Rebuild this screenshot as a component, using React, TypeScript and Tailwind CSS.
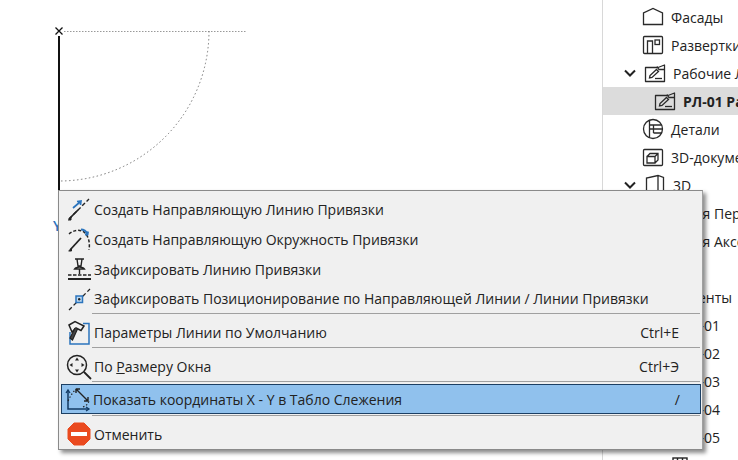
import { ReactNode } from "react";

type TRow = {
  label: string;
  icon?: ReactNode;
  chevron?: boolean;
  selected?: boolean;
  pad: string;
};

const Chevron = () => (
  <svg width="14" height="9" viewBox="0 0 14 9" className="shrink-0">
    <path d="M2 1.5 L7 6.5 L12 1.5" fill="none" stroke="#222" strokeWidth="2" />
  </svg>
);

const TreeIcon = ({ children }: { children: ReactNode }) => (
  <svg width="22" height="22" viewBox="0 0 22 22" fill="none" stroke="#2a2a2a" strokeWidth="1.3" className="shrink-0">
    {children}
  </svg>
);

const sheet = (
  <>
    <path d="M1.5 19.5V5.5H14L20.5 3V19.5Z" strokeLinejoin="round" />
    <path d="M13 4.5L15 7.5L20 7.5" />
    <path d="M5.5 16L6 13.5L12.5 7.5L14.5 9.5L8 15.5Z" />
    <path d="M11 16.5H18" />
  </>
);

const rows: TRow[] = [
  { label: "Фасады", pad: "pl-[39px]", icon: <TreeIcon><path d="M1.5 18.5V7L11 2.5L20.5 7V18.5Z" /></TreeIcon> },
  { label: "Развертки", pad: "pl-[39px]", icon: <TreeIcon><rect x="1.5" y="2.5" width="19" height="17" rx="1" /><path d="M5.5 19V7H10.5V19" /><rect x="13" y="6" width="4.5" height="4.5" /></TreeIcon> },
  { label: "Рабочие Листы", pad: "pl-[20px]", chevron: true, icon: <TreeIcon>{sheet}</TreeIcon> },
  { label: "РЛ-01 Рабочий Лист", pad: "pl-[51px]", selected: true, icon: <TreeIcon>{sheet}</TreeIcon> },
  { label: "Детали", pad: "pl-[39px]", icon: <TreeIcon><circle cx="11" cy="11" r="9.5" /><path d="M7.5 2V20M7.5 7H19.5M11.5 7V15M7.5 11H11.5M11.5 11H20.5M11.5 15H19.5" /></TreeIcon> },
  { label: "3D-документы", pad: "pl-[39px]", icon: <TreeIcon><rect x="1.5" y="3.5" width="19" height="16" rx="1" /><path d="M5 10.5H13V17H5ZM5 10.5L8 7.5H16V14L13 17M13 10.5L16 7.5" /></TreeIcon> },
  { label: "3D", pad: "pl-[20px]", chevron: true, icon: <TreeIcon><path d="M2.5 20V4L14 1.5L19.5 3.5V20ZM14 1.5V20" /></TreeIcon> },
  { label: "Общая Перспектива", pad: "pl-[60px]" },
  { label: "Общая Аксонометрия", pad: "pl-[60px]" },
  { label: "Итоги", pad: "pl-[60px]" },
  { label: "Элементы", pad: "pl-[60px]" },
  { label: "ПКЭ-01", pad: "pl-[69px]" },
  { label: "ПКЭ-02", pad: "pl-[69px]" },
  { label: "ПКЭ-03", pad: "pl-[69px]" },
  { label: "ПКЭ-04", pad: "pl-[69px]" },
  { label: "ПКЭ-05", pad: "pl-[69px]" },
  { label: "", pad: "pl-[69px]", icon: <svg width="16" height="16" viewBox="0 0 16 16" fill="none" stroke="#222" strokeWidth="1.4"><rect x="1" y="1" width="14" height="14" /><path d="M1 5H15M5.5 1V15M10.5 1V15" /></svg> },
];

const MenuIcon = ({ children }: { children: ReactNode }) => (
  <svg width="26" height="26" viewBox="0 0 26 26" fill="none" stroke="#222" strokeWidth="1.5" className="shrink-0">
    {children}
  </svg>
);

const icons = {
  line: (
    <MenuIcon>
      <path d="M3 23L23 3" strokeDasharray="4 2.2" strokeWidth="1.4" />
      <path d="M3 23L12 14" strokeWidth="1.7" />
      <path d="M2 24h3v-3" fill="#222" strokeWidth="1" />
      <path d="M7 12L14 6M11 5.5L15 5L14.5 9" stroke="#2b74bd" strokeWidth="1.7" />
    </MenuIcon>
  ),
  circle: (
    <MenuIcon>
      <path d="M3 8C9 3 16 3 20 8C23 12 24 18 23 24" strokeDasharray="3 2" />
      <path d="M4 24L15 12" strokeWidth="1.8" />
      <path d="M2.5 25h3v-3" fill="#222" strokeWidth="1" />
      <path d="M15 3.5C18 3.5 20 5 21.5 8M19 8.5L21.5 8.5L22 5.5" stroke="#2b74bd" strokeWidth="2" />
    </MenuIcon>
  ),
  pin: (
    <MenuIcon>
      <path d="M9 3H18M11 3L12 10H15L16 3M8.5 13C10 10.5 17 10.5 18.5 13ZM13.5 13V18" strokeWidth="1.4" />
      <path d="M2 19H25" strokeDasharray="3.5 1.5" />
      <path d="M2 23H25" strokeWidth="2" />
    </MenuIcon>
  ),
  lock: (
    <MenuIcon>
      <path d="M3 24L24 3" strokeDasharray="4 2.5" strokeWidth="1.3" />
      <rect x="10" y="10" width="6.5" height="6.5" stroke="#2b74bd" strokeWidth="1.5" fill="#bcd8f0" />
      <circle cx="13.2" cy="13.2" r="1.2" fill="#222" stroke="none" />
    </MenuIcon>
  ),
  params: (
    <MenuIcon>
      <path d="M4 12V24H23V3.5H17" stroke="#2b74bd" strokeWidth="1.5" />
      <path d="M3 5L9 1.5L18 6L15 10.5L10 8L6 12Z" fill="#f0f0f0" strokeWidth="1.5" />
      <path d="M9 8L4 18L6.5 20L11.5 9" fill="#444" strokeWidth="1.2" />
    </MenuIcon>
  ),
  zoom: (
    <MenuIcon>
      <circle cx="11" cy="11" r="9.5" strokeWidth="1.5" />
      <path d="M18 18L25 25" strokeWidth="1.8" />
      <path d="M11 3.5L9 6.5H13ZM11 18.5L9 15.5H13ZM3.5 11L6.5 9V13ZM18.5 11L15.5 9V13Z" fill="#222" stroke="none" />
    </MenuIcon>
  ),
  coords: (
    <MenuIcon>
      <path d="M3 4V23H24" stroke="#123a63" strokeWidth="1.5" />
      <path d="M1 7L3 4L5 7M21 21L24 23L21 25" stroke="#123a63" strokeWidth="1.3" />
      <path d="M11 3L23 15M11 3L11 7M11 3L15 3M23 15V11M23 15H19" stroke="#222" strokeWidth="1.4" />
      <path d="M3 15C6 9 8 6 11 3M18 21C21 20 23 18 24 15" stroke="#222" strokeWidth="1.2" strokeDasharray="1.5 2" />
    </MenuIcon>
  ),
  cancel: (
    <svg width="24" height="24" viewBox="0 0 24 24" className="shrink-0">
      <path d="M7 1H17L23 7V17L17 23H7L1 17V7Z" fill="#ea4a1f" stroke="#ea4a1f" strokeLinejoin="round" />
      <rect x="4" y="10" width="16" height="4" fill="#fff" />
    </svg>
  ),
};

const MenuRow = ({
  icon,
  shortcut,
  height,
  active,
  children,
}: {
  icon: ReactNode;
  shortcut?: string;
  height: string;
  active?: boolean;
  children: ReactNode;
}) => (
  <div
    className={`flex items-center ${height} ${
      active ? "ml-[2px] mr-[1px] bg-[#90c1ed] border border-[#1c3f63]" : "ml-[3px] mr-[2px] border border-transparent"
    }`}
  >
    <span className="w-[31px] flex justify-center shrink-0">{icon}</span>
    <span className="flex-1 whitespace-nowrap">{children}</span>
    {shortcut && <span className="pr-[20px]">{shortcut}</span>}
  </div>
);

const Separator = ({ className }: { className: string }) => (
  <div className={`h-px ml-[33px] mr-[2px] bg-[#a0a0a0] ${className}`} />
);

export default function App() {
  return (
    <div className="relative w-[738px] h-[460px] flex overflow-hidden bg-white font-['Open_Sans',sans-serif] text-[#222]">
      <div className="relative flex-1">
        <svg width="300" height="200" viewBox="0 0 300 200" className="block">
          <path d="M59 36V190" stroke="#111" strokeWidth="2" />
          <path d="M55.5 27.5L62.5 34.5M62.5 27.5L55.5 34.5" stroke="#111" strokeWidth="1.3" />
          <path d="M64 31.5H246" stroke="#999" strokeDasharray="1.5 1.5" />
          <path d="M209 31A150 150 0 0 1 59 181" fill="none" stroke="#777" strokeDasharray="1.5 2.5" />
        </svg>
        <span className="absolute left-[53px] top-[215px] text-[14px] font-semibold text-[#2b74bd]">Y</span>
      </div>

      <div className="w-[136px] shrink-0 border-l border-[#d8d8d8] pt-[3px] text-[14px] overflow-hidden">
        {rows.map((row, i) => (
          <div
            key={i}
            className={`flex items-center gap-[7px] h-7 whitespace-nowrap ${row.pad} ${
              row.selected ? "bg-[#dcdcdc] font-bold" : ""
            }`}
          >
            {row.chevron && <Chevron />}
            {row.icon}
            <span>{row.label}</span>
          </div>
        ))}
      </div>

      <div className="absolute left-[58px] top-[190px] w-[645px] h-[260px] pt-[3px] bg-[#f0f0f0] border border-[#8a8a8a] border-r-[#a0a0a0] shadow-[3px_3px_4px_rgba(0,0,0,0.45)] text-[14px] text-[#222]">
        <MenuRow icon={icons.line} height="h-[30px]">Создать Направляющую Линию Привязки</MenuRow>
        <MenuRow icon={icons.circle} height="h-[30px]">Создать Направляющую Окружность Привязки</MenuRow>
        <MenuRow icon={icons.pin} height="h-[30px]">Зафиксировать Линию Привязки</MenuRow>
        <MenuRow icon={icons.lock} height="h-[29px]">Зафиксировать Позиционирование по Направляющей Линии / Линии Привязки</MenuRow>
        <Separator className="mb-[4px]" />
        <MenuRow icon={icons.params} shortcut="Ctrl+E" height="h-[29px]">Параметры Линии по Умолчанию</MenuRow>
        <Separator className="mb-[4px]" />
        <MenuRow icon={icons.zoom} shortcut="Ctrl+Э" height="h-[29px]">
          По <span className="underline">Р</span>азмеру Окна
        </MenuRow>
        <Separator className="mb-[2px]" />
        <MenuRow icon={icons.coords} shortcut="/" height="h-[30px]" active>Показать координаты X - Y в Табло Слежения</MenuRow>
        <Separator className="mt-px mb-[3px]" />
        <MenuRow icon={icons.cancel} height="h-[30px]">Отменить</MenuRow>
      </div>
    </div>
  );
}
